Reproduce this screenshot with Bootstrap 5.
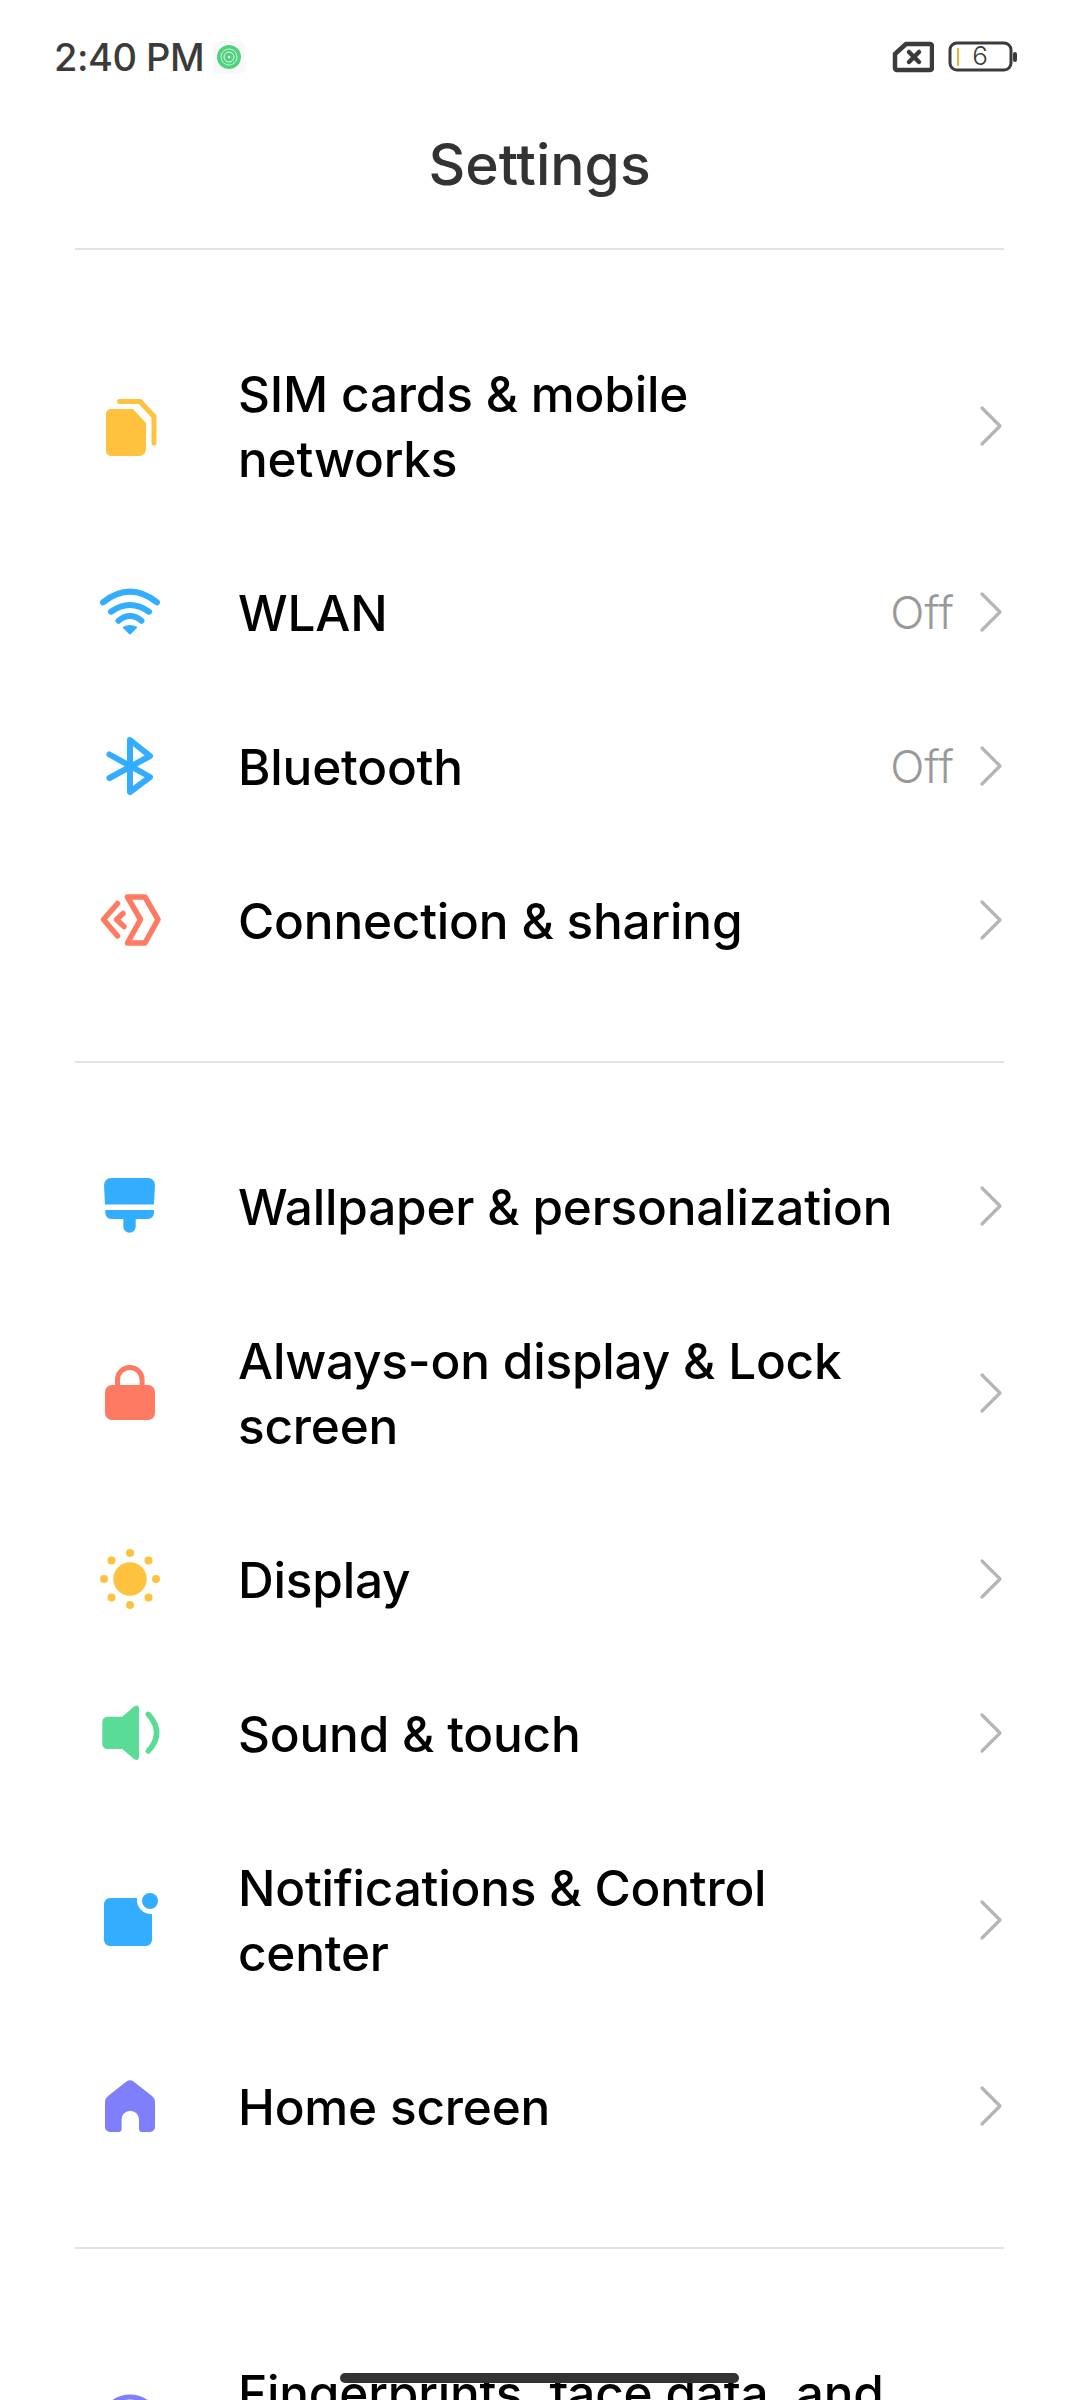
<!DOCTYPE html>
<html lang="en">
<head>
  <meta charset="UTF-8">
  <title>Settings</title>
  <link href="https://cdn.jsdelivr.net/npm/bootstrap@5.3.0/dist/css/bootstrap.min.css" rel="stylesheet">
  <style>
    html, body { height: 2400px; overflow: hidden; }
    body { background: #fff; font-family: Inter, "Noto Sans", sans-serif; position: relative; }
    .status-bar { height: 114px; padding: 0 62px 0 54px; color: #3b3b3b; }
    .status-time { font-size: 38px; line-height: 1; margin-right: 9px; letter-spacing: -0.5px; font-weight: 450; }
    .app-badge { width: 32px; height: 33px; background: #f8f8f8; border-radius: 7px; }
    .status-icons { gap: 14px; }
    .title-bar { height: 136px; border-bottom: 2px solid #e3e3e3; margin: 0 76px 0 75px; }
    .title-bar h1 { font-size: 57px; font-weight: 450; color: #333; margin: 0 0 55px; line-height: 1; }
    .group-list { margin: 0 76px 0 75px; padding: 66px 0 64px; border-bottom: 2px solid #e3e3e3; }
    .group-list.no-line { border-bottom: 0; }
    .set-row { min-height: 154px; }
    .set-row.two-line { min-height: 219px; }
    .row-icon { width: 163px; padding-left: 23px; flex: none; }
    .row-icon svg { display: block; }
    .row-label { font-size: 49.5px; line-height: 65px; color: #000; font-weight: 450; padding-top: 3px; letter-spacing: -0.2px; }
    .row-value { font-size: 45px; font-weight: 300; color: #999; margin-right: 25px; padding-top: 2px; }
    .row-end { margin-left: auto; margin-right: 1px; }
    .home-pill { position: absolute; left: 340px; top: 2373px; width: 399px; height: 10px; background: #333; border-radius: 5px; }
  </style>
</head>
<body>
  <div class="status-bar d-flex align-items-center">
    <span class="status-time">2:40 PM</span>
    <span class="app-badge d-flex align-items-center justify-content-center">
      <svg width="24" height="24" viewBox="0 0 24 24">
        <circle cx="12" cy="12" r="12" fill="#4fd27e"/>
        <circle cx="12" cy="12" r="8" fill="none" stroke="#cdf3da" stroke-width="1"/>
        <circle cx="12" cy="12" r="5" fill="none" stroke="#e6f9ed" stroke-width="1"/>
        <circle cx="12" cy="12" r="1.3" fill="#fff"/>
      </svg>
    </span>
    <span class="status-icons ms-auto d-flex align-items-center">
      <svg width="42" height="32" viewBox="0 0 42 32">
        <path d="M14 3H38a2 2 0 0 1 2 2V27a2 2 0 0 1-2 2H5a2 2 0 0 1-2-2V13Z" fill="none" stroke="#3b3b3b" stroke-width="4.5" stroke-linejoin="round"/>
        <path d="M17 11L27 21M27 11L17 21" stroke="#3b3b3b" stroke-width="4.5" stroke-linecap="round"/>
      </svg>
      <svg width="70" height="32" viewBox="0 0 70 32">
        <rect x="2" y="2" width="61" height="27" rx="7" fill="none" stroke="#3b3b3b" stroke-width="3"/>
        <rect x="9" y="7" width="2" height="18" fill="#f2b233"/>
        <text x="32" y="24" font-size="26" fill="#3b3b3b" text-anchor="middle" font-family="Inter, sans-serif" font-weight="300">6</text>
        <rect x="65" y="11" width="4" height="10" rx="2" fill="#3b3b3b"/>
      </svg>
    </span>
  </div>

  <div class="title-bar d-flex align-items-end justify-content-center">
    <h1>Settings</h1>
  </div>

  <div class="group-list">
    <div class="set-row two-line d-flex align-items-center">
      <div class="row-icon">
        <svg width="64" height="64" viewBox="0 0 64 64">
          <path d="M13 15H35L48 29V55a7 7 0 0 1-7 7H13a5 5 0 0 1-5-5V20a5 5 0 0 1 5-5Z" fill="#ffc23f"/>
          <path d="M21.5 7.5H42L56 22.5V49" fill="none" stroke="#ffc23f" stroke-width="5" stroke-linecap="round" stroke-linejoin="round"/>
        </svg>
      </div>
      <div class="row-label">SIM cards &amp; mobile<br>networks</div>
      <div class="row-end d-flex align-items-center">
        <svg width="24" height="42" viewBox="0 0 24 42"><path d="M3 3L21 21L3 39" fill="none" stroke="#b5b5b5" stroke-width="3.2" stroke-linecap="round" stroke-linejoin="round"/></svg>
      </div>
    </div>
    <div class="set-row d-flex align-items-center">
      <div class="row-icon">
        <svg width="64" height="64" viewBox="0 0 64 64">
          <g fill="none" stroke="#33adff" stroke-width="6" stroke-linecap="round">
            <path d="M5 22.3Q32 1.1 59 22.3"/>
            <path d="M13 31.7Q32 18.3 51 31.7"/>
            <path d="M20.5 40.7Q32 31.3 43.5 40.7"/>
          </g>
          <path d="M26 47.5Q32 44.5 38 47.5L32 53.5Z" fill="#33adff" stroke="#33adff" stroke-width="2" stroke-linejoin="round"/>
        </svg>
      </div>
      <div class="row-label">WLAN</div>
      <div class="row-end d-flex align-items-center">
        <span class="row-value">Off</span>
        <svg width="24" height="42" viewBox="0 0 24 42"><path d="M3 3L21 21L3 39" fill="none" stroke="#b5b5b5" stroke-width="3.2" stroke-linecap="round" stroke-linejoin="round"/></svg>
      </div>
    </div>
    <div class="set-row d-flex align-items-center">
      <div class="row-icon">
        <svg width="64" height="64" viewBox="0 0 64 64">
          <path d="M11.5 20.5L52 43L32 58V6L52 22L11.5 44" fill="none" stroke="#33adff" stroke-width="6" stroke-linecap="round" stroke-linejoin="round"/>
        </svg>
      </div>
      <div class="row-label">Bluetooth</div>
      <div class="row-end d-flex align-items-center">
        <span class="row-value">Off</span>
        <svg width="24" height="42" viewBox="0 0 24 42"><path d="M3 3L21 21L3 39" fill="none" stroke="#b5b5b5" stroke-width="3.2" stroke-linecap="round" stroke-linejoin="round"/></svg>
      </div>
    </div>
    <div class="set-row d-flex align-items-center">
      <div class="row-icon">
        <svg width="64" height="64" viewBox="0 0 64 64">
          <g fill="none" stroke="#ff7a62" stroke-width="5.5" stroke-linecap="round" stroke-linejoin="round">
            <path d="M29.5 9H47L60 31.5L47 55H29.5L42.5 31.5Z"/>
            <path d="M19.5 15.5L5.5 31.5L19.5 48"/>
            <path d="M25 25.5L18.5 31.5L26 38.5"/>
          </g>
        </svg>
      </div>
      <div class="row-label">Connection &amp; sharing</div>
      <div class="row-end d-flex align-items-center">
        <svg width="24" height="42" viewBox="0 0 24 42"><path d="M3 3L21 21L3 39" fill="none" stroke="#b5b5b5" stroke-width="3.2" stroke-linecap="round" stroke-linejoin="round"/></svg>
      </div>
    </div>
  </div>

  <div class="group-list">
    <div class="set-row d-flex align-items-center">
      <div class="row-icon">
        <svg width="64" height="64" viewBox="0 0 64 64">
          <path d="M13 4H50a7 7 0 0 1 7 7L56 30.5H7L6 11a7 7 0 0 1 7-7Z" fill="#33adff"/>
          <path d="M7.3 36H56V39a6 6 0 0 1-6 6H37.7V52.5a6.2 6.2 0 0 1-12.4 0V45H13a6 6 0 0 1-5.7-6Z" fill="#33adff"/>
        </svg>
      </div>
      <div class="row-label">Wallpaper &amp; personalization</div>
      <div class="row-end d-flex align-items-center">
        <svg width="24" height="42" viewBox="0 0 24 42"><path d="M3 3L21 21L3 39" fill="none" stroke="#b5b5b5" stroke-width="3.2" stroke-linecap="round" stroke-linejoin="round"/></svg>
      </div>
    </div>
    <div class="set-row two-line d-flex align-items-center">
      <div class="row-icon">
        <svg width="64" height="64" viewBox="0 0 64 64">
          <rect x="7" y="24" width="50" height="35" rx="7" fill="#ff7a62"/>
          <path d="M19.5 26V18.7a12.3 12.3 0 0 1 24.6 0V26" fill="none" stroke="#ff7a62" stroke-width="5"/>
        </svg>
      </div>
      <div class="row-label">Always-on display &amp; Lock<br>screen</div>
      <div class="row-end d-flex align-items-center">
        <svg width="24" height="42" viewBox="0 0 24 42"><path d="M3 3L21 21L3 39" fill="none" stroke="#b5b5b5" stroke-width="3.2" stroke-linecap="round" stroke-linejoin="round"/></svg>
      </div>
    </div>
    <div class="set-row d-flex align-items-center">
      <div class="row-icon">
        <svg width="64" height="64" viewBox="0 0 64 64">
          <circle cx="32" cy="32" r="16.7" fill="#ffc23f"/>
          <g fill="#ffc23f">
            <circle cx="32" cy="6" r="4"/><circle cx="32" cy="58" r="4"/>
            <circle cx="6" cy="32" r="4"/><circle cx="58" cy="32" r="4"/>
            <circle cx="13.5" cy="13.5" r="4"/><circle cx="50.5" cy="13.5" r="4"/>
            <circle cx="13.5" cy="50.5" r="4"/><circle cx="50.5" cy="50.5" r="4"/>
          </g>
        </svg>
      </div>
      <div class="row-label">Display</div>
      <div class="row-end d-flex align-items-center">
        <svg width="24" height="42" viewBox="0 0 24 42"><path d="M3 3L21 21L3 39" fill="none" stroke="#b5b5b5" stroke-width="3.2" stroke-linecap="round" stroke-linejoin="round"/></svg>
      </div>
    </div>
    <div class="set-row d-flex align-items-center">
      <div class="row-icon">
        <svg width="64" height="64" viewBox="0 0 64 64">
          <path d="M10 15.7H24.3L36 5.5Q41 2.5 41 8V55Q41 61 36 58L24.3 48H10Q4.3 48 4.3 42V21.7Q4.3 15.7 10 15.7Z" fill="#5adc97"/>
          <path d="M50.3 13.3Q67 31.7 50.3 50" fill="none" stroke="#5adc97" stroke-width="5.5" stroke-linecap="round"/>
        </svg>
      </div>
      <div class="row-label">Sound &amp; touch</div>
      <div class="row-end d-flex align-items-center">
        <svg width="24" height="42" viewBox="0 0 24 42"><path d="M3 3L21 21L3 39" fill="none" stroke="#b5b5b5" stroke-width="3.2" stroke-linecap="round" stroke-linejoin="round"/></svg>
      </div>
    </div>
    <div class="set-row two-line d-flex align-items-center">
      <div class="row-icon">
        <svg width="64" height="64" viewBox="0 0 64 64">
          <path d="M12 10H39A14 14 0 0 0 54 26V52a6 6 0 0 1-6 6H12a6 6 0 0 1-6-6V16a6 6 0 0 1 6-6Z" fill="#33adff"/>
          <circle cx="52" cy="13" r="8" fill="#33adff"/>
        </svg>
      </div>
      <div class="row-label">Notifications &amp; Control<br>center</div>
      <div class="row-end d-flex align-items-center">
        <svg width="24" height="42" viewBox="0 0 24 42"><path d="M3 3L21 21L3 39" fill="none" stroke="#b5b5b5" stroke-width="3.2" stroke-linecap="round" stroke-linejoin="round"/></svg>
      </div>
    </div>
    <div class="set-row d-flex align-items-center">
      <div class="row-icon">
        <svg width="64" height="64" viewBox="0 0 64 64">
          <path d="M28.5 7.5Q32 5 35.5 7.5L54 22Q57 24.5 57 28V53a5 5 0 0 1-5 5H44a3 3 0 0 1-3-3V45.5a8.7 8.7 0 0 0-17.4 0V55a3 3 0 0 1-3 3H12a5 5 0 0 1-5-5V28Q7 24.5 10 22Z" fill="#7f7ffb"/>
        </svg>
      </div>
      <div class="row-label">Home screen</div>
      <div class="row-end d-flex align-items-center">
        <svg width="24" height="42" viewBox="0 0 24 42"><path d="M3 3L21 21L3 39" fill="none" stroke="#b5b5b5" stroke-width="3.2" stroke-linecap="round" stroke-linejoin="round"/></svg>
      </div>
    </div>
  </div>

  <div class="group-list no-line">
    <div class="set-row two-line d-flex align-items-center">
      <div class="row-icon">
        <svg width="64" height="64" viewBox="0 0 64 64">
          <circle cx="32" cy="32" r="28" fill="none" stroke="#7f7ffb" stroke-width="5"/>
        </svg>
      </div>
      <div class="row-label">Fingerprints, face data, and<br>screen lock</div>
      <div class="row-end d-flex align-items-center">
        <svg width="24" height="42" viewBox="0 0 24 42"><path d="M3 3L21 21L3 39" fill="none" stroke="#b5b5b5" stroke-width="3.2" stroke-linecap="round" stroke-linejoin="round"/></svg>
      </div>
    </div>
  </div>

  <div class="home-pill"></div>
  <script src="https://cdn.jsdelivr.net/npm/bootstrap@5.3.0/dist/js/bootstrap.bundle.min.js"></script>
</body>
</html>
